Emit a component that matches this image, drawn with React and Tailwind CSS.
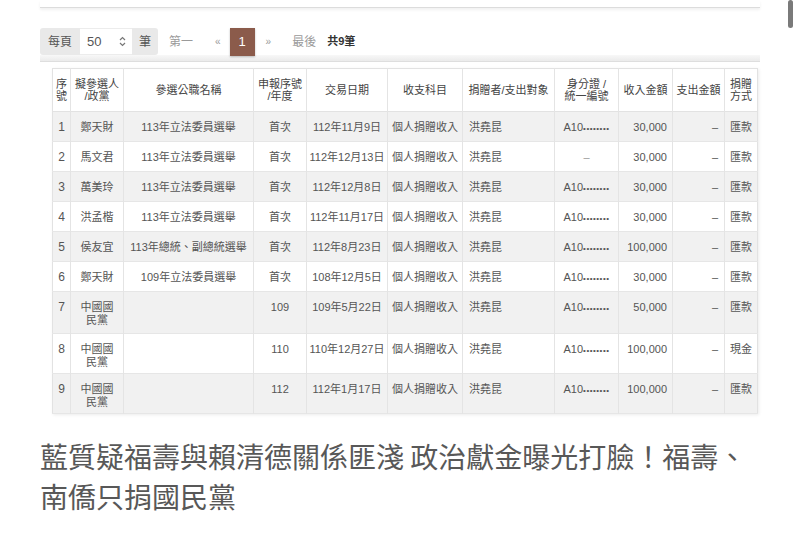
import React from "react";

const font = { fontFamily: '"Liberation Sans", "Noto Sans CJK TC", sans-serif' };

const rows = [
  ["1", ["鄭天財"], "113年立法委員選舉", "首次", "112年11月9日", true, "30,000", "匯款"],
  ["2", ["馬文君"], "113年立法委員選舉", "首次", "112年12月13日", false, "30,000", "匯款"],
  ["3", ["萬美玲"], "113年立法委員選舉", "首次", "112年12月8日", true, "30,000", "匯款"],
  ["4", ["洪孟楷"], "113年立法委員選舉", "首次", "112年11月17日", true, "30,000", "匯款"],
  ["5", ["侯友宜"], "113年總統、副總統選舉", "首次", "112年8月23日", true, "100,000", "匯款"],
  ["6", ["鄭天財"], "109年立法委員選舉", "首次", "108年12月5日", true, "30,000", "匯款"],
  ["7", ["中國國", "民黨"], "", "109", "109年5月22日", true, "50,000", "匯款"],
  ["8", ["中國國", "民黨"], "", "110", "110年12月27日", true, "100,000", "現金"],
  ["9", ["中國國", "民黨"], "", "112", "112年1月17日", true, "100,000", "匯款"],
];

const widths = [18, 53, 130, 53, 81, 75, 92, 64, 54, 52, 33];

function Th({ children, className = "" }) {
  return (
    <th className={`border-r border-[#e4e4e4] font-normal text-[11px] leading-[12px] text-[#444] align-middle ${className}`}>
      {children}
    </th>
  );
}

function Td({ children, className = "" }) {
  return (
    <td className={`border-r border-[#e4e4e4] align-top pt-[9px] text-[11px] leading-[13px] text-[#555] whitespace-nowrap ${className}`}>
      {children}
    </td>
  );
}

export default function App() {
  return (
    <div className="relative w-[800px] h-[537px] bg-white overflow-hidden" style={font}>
      <div className="absolute right-[7px] top-0 w-[5px] h-[28px] rounded-full bg-[#7a7a7a]" />

      <div className="mx-[40px]">
        <div className="h-[8px] border-b border-[#dcdcdc] shadow-[0_2px_3px_rgba(0,0,0,0.06)]" />

        <div className="mt-[20px] h-[27px] flex items-center text-[12px] text-[#555]">
          <div className="h-full w-[40px] flex items-center justify-center bg-[#e9e9e9] rounded-l-[3px]">每頁</div>
          <div className="h-full w-[52px] flex items-center justify-between pl-[7px] pr-[6px] bg-white border-y border-[#ececec]">
            <span className="text-[13px]">50</span>
            <svg width="7" height="11" viewBox="0 0 7 11" fill="none" stroke="#777" strokeWidth="1.2">
              <path d="M1 4 L3.5 1.5 L6 4" />
              <path d="M1 7 L3.5 9.5 L6 7" />
            </svg>
          </div>
          <div className="h-full w-[26px] flex items-center justify-center bg-[#e9e9e9] rounded-r-[3px]">筆</div>
          <span className="ml-[11px] text-[#9a9a9a]">第一</span>
          <span className="ml-[22px] text-[10px] text-[#9a9a9a]">«</span>
          <div className="ml-[9px] h-[28px] w-[25px] flex items-center justify-center bg-[#8b5b4b] text-white text-[13px] shadow-[0_1px_2px_rgba(0,0,0,0.25)]">1</div>
          <span className="ml-[11px] text-[10px] text-[#9a9a9a]">»</span>
          <span className="ml-[21px] text-[#9a9a9a]">最後</span>
          <span className="ml-[11px] text-[11px] font-bold text-[#333]">共9筆</span>
        </div>

        <div className="h-[7px] bg-gradient-to-b from-[#f8f8f8] to-[#ebebeb] border-b border-[#dedede]" />

        <div className="pt-[6px] pl-[12px] pr-[3px]">
          <table className="border-collapse table-fixed w-[705px] border border-[#e2e2e2] shadow-[1px_1px_3px_rgba(0,0,0,0.08)]">
            <colgroup>
              {widths.map((w, i) => (
                <col key={i} style={{ width: w }} />
              ))}
            </colgroup>
            <thead>
              <tr className="h-[43px] bg-white border-b border-[#e2e2e2]">
                <Th>序<br />號</Th>
                <Th>擬參選人<br />/政黨</Th>
                <Th>參選公職名稱</Th>
                <Th>申報序號<br />/年度</Th>
                <Th>交易日期</Th>
                <Th>收支科目</Th>
                <Th className="whitespace-nowrap">捐贈者/支出對象</Th>
                <Th>身分證 /<br />統一編號</Th>
                <Th>收入金額</Th>
                <Th>支出金額</Th>
                <Th className="border-r-0">捐贈<br />方式</Th>
              </tr>
            </thead>
            <tbody>
              {rows.map((r, i) => (
                <tr
                  key={i}
                  className={`${i % 2 === 0 ? "bg-[#f1f1f1]" : "bg-white"} ${i >= 6 ? (i === 6 ? "h-[42px]" : "h-[40px]") : "h-[30px]"} border-b border-[#e6e6e6]`}
                >
                  <Td className="text-center text-[12px]">{r[0]}</Td>
                  <Td className="text-center">
                    {r[1].map((t, j) => (
                      <div key={j}>{t}</div>
                    ))}
                  </Td>
                  <Td className="text-center">{r[2]}</Td>
                  <Td className="text-center">{r[3]}</Td>
                  <Td className="text-center">{r[4]}</Td>
                  <Td className="text-center">個人捐贈收入</Td>
                  <Td className="pl-[6px]">洪堯昆</Td>
                  <Td className="text-center">
                    {r[5] ? (
                      <span>
                        A10<span className="text-[8px] tracking-[0.5px]">••••••••</span>
                      </span>
                    ) : (
                      <span className="text-[#999]">–</span>
                    )}
                  </Td>
                  <Td className="text-right pr-[5px]">{r[6]}</Td>
                  <Td className="text-right pr-[6px]">–</Td>
                  <Td className="pl-[5px] border-r-0">{r[7]}</Td>
                </tr>
              ))}
            </tbody>
          </table>
        </div>

        <p
          className="mt-[22px] text-[28px] leading-[40px] text-[#585858] whitespace-nowrap"
          style={{ fontFamily: '"Noto Sans CJK TC", sans-serif' }}
        >
          藍質疑福壽與賴清德關係匪淺 政治獻金曝光打臉！福壽、
          <br />
          南僑只捐國民黨
        </p>
      </div>
    </div>
  );
}
